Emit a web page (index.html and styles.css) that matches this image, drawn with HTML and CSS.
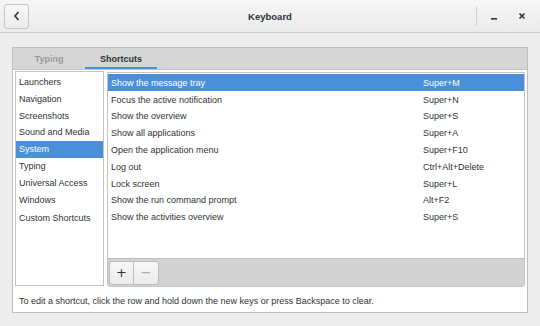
FILE: index.html
```html
<!DOCTYPE html>
<html>
<head>
<meta charset="utf-8">
<link rel="stylesheet" href="styles.css">
</head>
<body>
<div class="window">
  <header class="header">
    <div class="hleft">
      <button class="back"><svg width="10" height="12" viewBox="0 0 10 12"><polyline points="6.5,2 3,6 6.5,10" fill="none" stroke="#2e3436" stroke-width="1.6"/></svg></button>
    </div>
    <div class="title">Keyboard</div>
    <div class="hright">
      <span class="sep"></span>
      <span class="wbtn"><svg width="10" height="10" viewBox="0 0 10 10"><rect x="2" y="7" width="6" height="1.6" fill="#2e3436"/></svg></span>
      <span class="wbtn"><svg width="10" height="10" viewBox="0 0 10 10"><path d="M2.5 2.5 L7.5 7.5 M7.5 2.5 L2.5 7.5" stroke="#2e3436" stroke-width="1.6"/></svg></span>
    </div>
  </header>
  <main class="main">
    <div class="frame">
      <div class="tabs">
        <div class="tab">Typing</div>
        <div class="tab active">Shortcuts</div>
      </div>
      <div class="page">
        <div class="panes">
          <ul class="sections">
            <li>Launchers</li>
            <li>Navigation</li>
            <li>Screenshots</li>
            <li>Sound and Media</li>
            <li class="sel">System</li>
            <li>Typing</li>
            <li>Universal Access</li>
            <li>Windows</li>
            <li class="custom">Custom Shortcuts</li>
          </ul>
          <div class="right">
            <div class="shortcuts">
              <div class="row sel"><span>Show the message tray</span><span>Super+M</span></div>
              <div class="row"><span>Focus the active notification</span><span>Super+N</span></div>
              <div class="row"><span>Show the overview</span><span>Super+S</span></div>
              <div class="row"><span>Show all applications</span><span>Super+A</span></div>
              <div class="row"><span>Open the application menu</span><span>Super+F10</span></div>
              <div class="row"><span>Log out</span><span>Ctrl+Alt+Delete</span></div>
              <div class="row"><span>Lock screen</span><span>Super+L</span></div>
              <div class="row"><span>Show the run command prompt</span><span>Alt+F2</span></div>
              <div class="row"><span>Show the activities overview</span><span>Super+S</span></div>
            </div>
            <div class="toolbar">
              <div class="btngroup">
                <button class="tbtn">+</button>
                <button class="tbtn dim">−</button>
              </div>
            </div>
          </div>
        </div>
        <div class="hint">To edit a shortcut, click the row and hold down the new keys or press Backspace to clear.</div>
      </div>
    </div>
  </main>
</div>
</body>
</html>
```
FILE: styles.css
```css
* { box-sizing: border-box; }
html, body { margin: 0; padding: 0; }
body {
  width: 540px;
  height: 326px;
  background: #ededed;
  font-family: "Liberation Sans", "Noto Sans", sans-serif;
  font-size: 9px;
  color: #2e3436;
  overflow: hidden;
}
.window { width: 540px; height: 326px; }
.header {
  height: 33px;
  display: grid;
  grid-template-columns: 1fr auto 1fr;
  align-items: center;
  background: linear-gradient(#f6f6f6, #ebebeb);
  border-bottom: 1px solid #cdcdcd;
}
.hleft { padding-left: 4px; display: flex; align-items: center; }
.back {
  width: 25px;
  height: 25px;
  margin: 0;
  padding: 0;
  border: 1px solid #c6c6c6;
  border-radius: 3px;
  background: linear-gradient(#f8f8f8, #ececec);
  display: flex;
  align-items: center;
  justify-content: center;
}
.title { font-weight: bold; font-size: 9.5px; }
.hright {
  display: flex;
  justify-content: flex-end;
  align-items: center;
  padding-right: 12px;
}
.sep { width: 1px; height: 20px; background: #d0d0d0; margin-right: 11px; }
.wbtn { width: 12px; height: 12px; display: flex; align-items: center; justify-content: center; }
.wbtn + .wbtn { margin-left: 16px; }
.main { padding: 14px 12px 0 12px; }
.frame {
  height: 266px;
  border: 1px solid #bebebe;
  background: #ffffff;
  display: flex;
  flex-direction: column;
}
.tabs {
  height: 22px;
  flex: none;
  background: #d6d6d6;
  border-bottom: 1px solid #c4c4c4;
  display: flex;
}
.tab {
  width: 72px;
  display: flex;
  align-items: center;
  justify-content: center;
  color: #9a9c9a;
  font-weight: bold;
}
.tab.active {
  color: #2e3436;
  box-shadow: inset 0 -2px 0 #4a90d9;
}
.page { flex: 1; display: flex; flex-direction: column; }
.panes {
  display: flex;
  gap: 3px;
  padding: 1px 2px 0 2px;
  height: 217px;
  flex: none;
}
.sections {
  list-style: none;
  margin: 0 0 1px 0;
  padding: 2px 0 0 0;
  width: 89px;
  border: 1px solid #c4c4c4;
  background: #fff;
}
.sections li {
  height: 16.8px;
  line-height: 17.8px;
  padding-left: 3px;
  white-space: nowrap;
}
.sections li.sel { background: #4a90d9; color: #fff; }
.sections li.custom { height: 18px; line-height: 20px; }
.right {
  flex: 1;
  border: 1px solid #c4c4c4;
  border-radius: 0 0 3px 3px;
  display: flex;
  flex-direction: column;
  margin-top: 1px;
}
.shortcuts { flex: 1; background: #fff; padding-top: 1px; }
.row {
  height: 16.8px;
  display: grid;
  grid-template-columns: 1fr 101px;
  align-items: center;
  padding: 1px 0 0 3px;
  white-space: nowrap;
}
.row.sel { background: #4a90d9; color: #fff; }
.toolbar {
  height: 28px;
  flex: none;
  background: #d3d3d3;
  border-top: 1px solid #bdbdbd;
  padding: 2px 0 0 1px;
}
.btngroup { display: flex; }
.tbtn {
  width: 25px;
  height: 24px;
  margin: 0;
  padding: 0;
  border: 1px solid #bcbcbc;
  background: linear-gradient(#f7f7f7, #ebebeb);
  font-family: "DejaVu Sans", sans-serif;
  font-size: 13px;
  color: #2e3436;
  border-radius: 3px 0 0 3px;
  line-height: 20px;
}
.tbtn.dim { color: #a0a0a0; border-left: none; border-radius: 0 3px 3px 0; }
.hint {
  flex: 1;
  display: flex;
  align-items: center;
  padding: 3px 0 0 6px;
  white-space: nowrap;
}
```
